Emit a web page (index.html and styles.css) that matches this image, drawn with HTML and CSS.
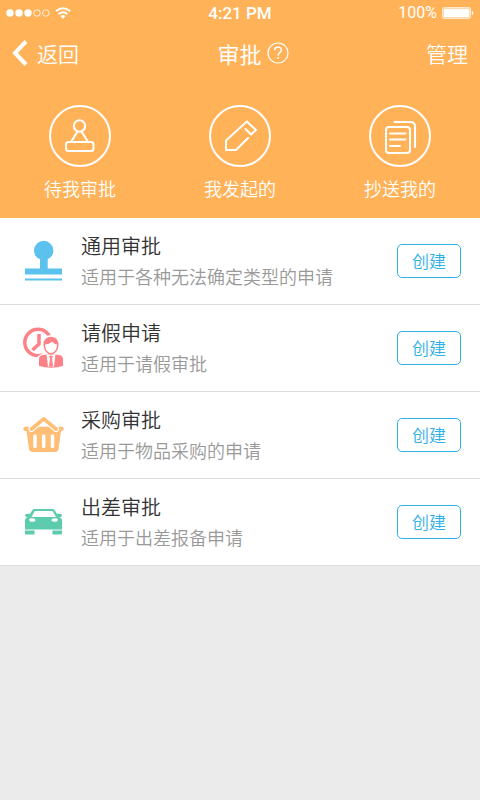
FILE: index.html
```html
<!DOCTYPE html>
<html lang="zh-CN">
<head>
<meta charset="utf-8">
<meta name="viewport" content="width=device-width, initial-scale=1">
<title>审批</title>
<link rel="stylesheet" href="styles.css">
</head>
<body>
<header class="header">
  <div class="status">
    <div class="status-left">
      <svg width="44" height="10" viewBox="0 0 44 10" fill="#fff" aria-hidden="true"><circle cx="4" cy="5" r="3.7"/><circle cx="13" cy="5" r="3.7"/><circle cx="22" cy="5" r="3.7"/><g fill="none" stroke="#fff" stroke-width=".8"><circle cx="31" cy="5" r="3.3"/><circle cx="39.800" cy="5" r="3.3"/></g></svg>
      <svg width="16" height="12" viewBox="0 0 16 12" aria-hidden="true"><g fill="none" stroke="#fff" stroke-width="1.8"><path d="M.9 4.300Q8-1.900 15.100 4.300"/><path d="M3.500 7.100Q8 3.300 12.500 7.100"/></g><path d="M5.300 9Q8 6.900 10.700 9L8 11.700Z" fill="#fff"/></svg>
    </div>
    <span class="time">4:21 PM</span>
    <div class="status-right">
      <span>100%</span>
      <svg width="32" height="12" viewBox="0 0 32 12" aria-hidden="true"><rect x=".5" y=".5" width="28" height="11" rx="1.500" fill="none" stroke="#fff" stroke-opacity=".7"/><rect x="1.500" y="1.500" width="26" height="9" fill="#fff"/><path d="M29.800 4Q31.500 4.500 31.500 6T29.800 8Z" fill="#fff"/></svg>
    </div>
  </div>
  <nav class="nav">
    <a class="back" href="#"><svg width="16" height="28" viewBox="0 0 16 28" aria-hidden="true"><path d="M14 2.500L3 14L14 25.500" fill="none" stroke="#fff" stroke-width="4"/></svg>返回</a>
    <div class="heading"><h1>审批</h1>
      <button class="help" aria-label="帮助"><svg width="22" height="22" viewBox="0 0 22 22" fill="none" stroke="#fff" aria-hidden="true"><circle cx="11" cy="11" r="10" stroke-width="1.200"/><path d="M7.700 8.300C7.800 4 14.300 4 14.300 8C14.300 10.600 11 10.600 11 13.800" stroke-width="1.500"/><path d="M11 15.300V17" stroke-width="1.600"/></svg></button>
    </div>
    <a class="manage" href="#">管理</a>
  </nav>
  <div class="tabs">
    <a class="tab" href="#"><svg width="62" height="62" viewBox="0 0 62 62" aria-hidden="true"><circle cx="31" cy="31" r="30"/><circle cx="30.500" cy="21" r="5.700"/><path d="M28.500 26.500L22.300 36.500M32.500 26.500L38.700 36.500"/><rect x="17" y="37" width="27.500" height="9" rx="2.500"/></svg>待我审批</a>
    <a class="tab" href="#"><svg width="62" height="62" viewBox="0 0 62 62" aria-hidden="true"><circle cx="31" cy="31" r="30"/><path d="M39 33L27 45H17V35.500L37.800 16.500L47 25L42 29.500L36.500 24"/></svg>我发起的</a>
    <a class="tab" href="#"><svg width="62" height="62" viewBox="0 0 62 62" aria-hidden="true"><circle cx="31" cy="31" r="30"/><rect x="17" y="22" width="24" height="26" rx="3"/><path d="M25.500 17H41.500Q46 17 46 21.500V42M21 28.500H36.500M21 34.500H36.500M21 41H31"/></svg>抄送我的</a>
  </div>
</header>
<main>
  <ul class="list">
    <li class="row">
      <svg class="icon" width="42" height="42" viewBox="0 0 42 42" fill="#5bc2ee" aria-hidden="true"><circle cx="20.700" cy="10.500" r="9.700"/><path d="M17 18H24.700V28.500H39V34.500H2V28.500H17ZM2 38.500H39V40.500H2Z"/></svg>
      <div class="text"><h2>通用审批</h2><p>适用于各种无法确定类型的申请</p></div>
      <button class="create">创建</button>
    </li>
    <li class="row">
      <svg class="icon" width="42" height="42" viewBox="0 0 42 42" aria-hidden="true"><circle cx="15" cy="15.500" r="13.200" fill="none" stroke="#fd8287" stroke-width="3.500"/><path d="M16 7V17L9.500 23" fill="none" stroke="#fd8287" stroke-width="3.500"/><path d="M14 42V30L20 26Q15 9 28 8Q41 9 37 25L42 31V42Z" fill="#fff"/><path d="M16 39V32Q16 28.500 20 28L23.500 27.500H32.500L36 28Q40 28.500 40 32V39Q28 42.500 16 39Z" fill="#fd8287"/><path d="M28 9.800C33 9.800 35.700 13.500 35.500 18C35.300 23 32 27.500 28 27.500S20.700 23 20.500 18C20.300 13.500 23 9.800 28 9.800Z" fill="#fd8287"/><path d="M22 17.500C25 17.500 27 16.500 29 14.500Q31 17 34 17.500C34 22 31.500 26 28 26S22 22 22 17.500Z" fill="#fff"/><path d="M23.500 27L28 28.500L32.500 27L31 39.500H25Z" fill="#fff"/><path d="M26 29H30L29 31.500L30 39.500H26L27 31.500Z" fill="#fd8287"/></svg>
      <div class="text"><h2>请假申请</h2><p>适用于请假审批</p></div>
      <button class="create">创建</button>
    </li>
    <li class="row">
      <svg class="icon" width="42" height="42" viewBox="0 0 42 42" aria-hidden="true"><path d="M1.500 12.800H39.500Q42 14.700 39.500 17H38L35.500 35Q35 38 32 38H9.500Q6.500 38 6 35L3.500 17H1.500Q-1 14.700 1.500 12.800Z" fill="#ffbd76"/><path d="M8.500 15L20.700 4.800L33 15" fill="none" stroke="#fff" stroke-width="6" stroke-linecap="round" stroke-linejoin="round"/><path d="M8.500 15L20.700 4.800L33 15" fill="none" stroke="#ffbd76" stroke-width="3.600" stroke-linecap="round" stroke-linejoin="round"/><path d="M12 22V32.500M20.700 22V32.500M29.500 22V32.500" stroke="#fff" stroke-width="3.500" stroke-linecap="round"/></svg>
      <div class="text"><h2>采购审批</h2><p>适用于物品采购的申请</p></div>
      <button class="create">创建</button>
    </li>
    <li class="row">
      <svg class="icon" width="42" height="42" viewBox="0 0 42 42" fill="#5dccae" aria-hidden="true"><path d="M5 16L9.300 9.200Q10 8 11.300 8H29.500Q31 8 31.600 9.200L36 16Q39 17 39 19.500V28.500H2V19.500Q2 17 5 16ZM8.500 16H33L29.500 10H11.700Z" fill-rule="evenodd"/><path d="M2 14.500Q2 12.800 4 12.800H7.500L5 16.500Q2 16 2 14.500ZM39 14.500Q39 12.800 37 12.800H33.500L36 16.500Q39 16 39 14.500Z"/><path d="M2 29.500H11.500V33.500H3Q2 33.500 2 32.500ZM29.500 29.500H39V32.500Q39 33.500 38 33.500H29.500Z"/><g fill="#fff"><path d="M6.500 17.500Q12.500 16.500 12.500 19.500Q12 21 8.500 20.700Q5.500 20.500 6.500 17.500ZM34.500 17.500Q28.500 16.500 28.500 19.500Q29 21 32.500 20.700Q35.500 20.500 34.500 17.500Z"/></g></svg>
      <div class="text"><h2>出差审批</h2><p>适用于出差报备申请</p></div>
      <button class="create">创建</button>
    </li>
  </ul>
</main>
</body>
</html>
```
FILE: styles.css
```css
* { box-sizing: border-box; }
body {
  margin: 0;
  background: #ebebeb;
  color: #333;
  font-family: "Noto Sans CJK SC", sans-serif;
  font-weight: 350;
}
h1, h2, p, ul { margin: 0; padding: 0; font-weight: inherit; }
a { color: inherit; text-decoration: none; }
svg { display: block; flex: none; }
button { padding: 0; background: none; font: inherit; cursor: pointer; }

.header { background: #ffb258; color: #fff; padding-bottom: 17px; }
.status, .nav {
  display: grid;
  grid-template-columns: 1fr auto 1fr;
  align-items: center;
}
.status {
  height: 26px;
  padding: 0 6px;
  font: 16px/26px Roboto, sans-serif;
}
.time { font-size: 17px; font-weight: 500; }
.status-left { display: flex; align-items: center; gap: 5px; }
.status-right { display: flex; align-items: center; justify-content: flex-end; gap: 5px; }
.nav { height: 54px; padding: 0 12px; font-size: 21px; line-height: 30px; }
.back { display: flex; align-items: center; gap: 9px; }
.heading { display: flex; align-items: center; gap: 5px; padding-left: 26px; }
h1 { font-size: 22px; font-weight: 400; }
.help { border: 0; }
.manage { text-align: right; }

.tabs { display: grid; grid-template-columns: repeat(3, 1fr); padding-top: 25px; }
.tab {
  display: flex;
  flex-direction: column;
  align-items: center;
  gap: 8px;
  font-size: 18px;
  line-height: 26px;
}
.tab svg {
  fill: none;
  stroke: #fff;
  stroke-width: 2;
  stroke-linecap: round;
  stroke-linejoin: round;
}

.list { list-style: none; }
.row {
  display: flex;
  align-items: center;
  min-height: 87px;
  padding: 0 19px 0 23px;
  background: #fff;
  border-bottom: 1px solid #dcdcdc;
}
.text { flex: 1; margin-left: 16px; }
h2 { font-size: 20px; line-height: 30px; }
p { color: #999; font-size: 18px; line-height: 30px; }
.create {
  width: 64px;
  height: 34px;
  border: 1px solid #2fb0e6;
  border-radius: 5px;
  color: #2fb0e6;
  font-size: 17px;
  line-height: 30px;
}
```
